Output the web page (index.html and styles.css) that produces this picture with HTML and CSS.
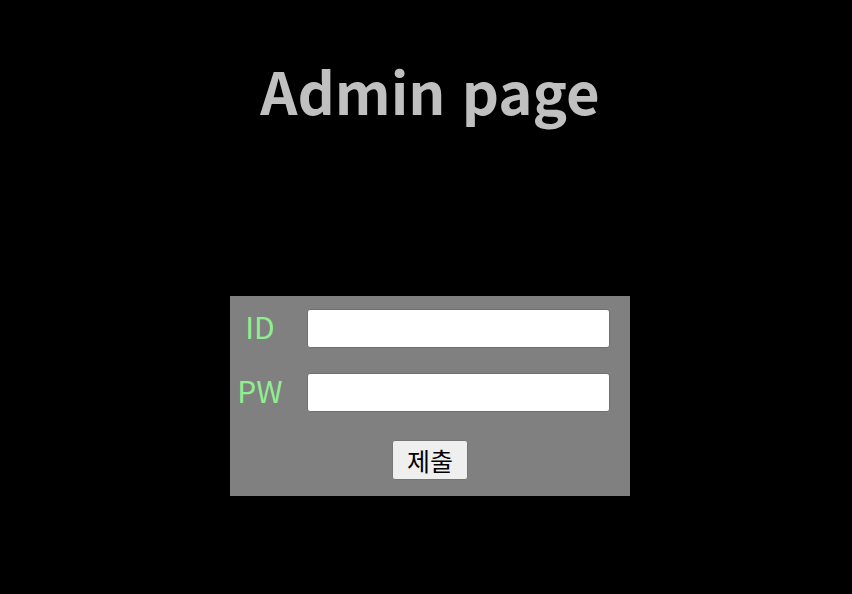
FILE: index.html
```html
<!DOCTYPE html>
<html lang="ko">
<head>
    <meta charset="UTF-8">
    <title>Admin page</title>
    <link rel="stylesheet" href="styles.css">
</head>
<body>
    <h1 class="title">Admin page</h1>

    <form class="login-box">
        <label for="id" class="label">ID</label>
        <input type="text" id="id" class="field">

        <label for="pw" class="label">PW</label>
        <input type="password" id="pw" class="field">

        <div class="actions">
            <button type="button" class="submit">제출</button>
        </div>
    </form>
</body>
</html>
```

FILE: styles.css
```css
body {
    margin: 0;
    height: 594px;
    background: #000;
    font-family: "Noto Sans CJK KR", "Noto Sans", sans-serif;
    overflow: hidden;
}
.title {
    margin: 0;
    padding-top: 46px;
    padding-left: 8px;
    text-align: center;
    font-size: 58px;
    font-weight: 700;
    line-height: 88px;
    color: #c0c0c0;
}
.login-box {
    width: 400px;
    margin: 162px 0 0 230px;
    padding: 13px 20px 16px 0;
    box-sizing: border-box;
    background: #808080;
    display: grid;
    grid-template-columns: 60px 1fr;
    column-gap: 17px;
    row-gap: 25px;
    align-items: center;
}
.label {
    text-align: center;
    font-size: 30px;
    color: #90ee90;
    line-height: 34px;
    padding-bottom: 5px;
}
.field {
    height: 39px;
    box-sizing: border-box;
    border: 1px solid #6f6f6f;
    border-radius: 3px;
    background: #fff;
}
.actions {
    grid-column: 1 / 3;
    text-align: center;
    padding-left: 20px;
    margin-top: 3px;
}
.submit {
    width: 76px;
    height: 40px;
    font-family: "Noto Sans CJK KR", sans-serif;
    font-size: 25px;
    color: #000;
    background: #efefef;
    border: 1px solid #767676;
    border-radius: 3px;
    padding: 0;
}
```
